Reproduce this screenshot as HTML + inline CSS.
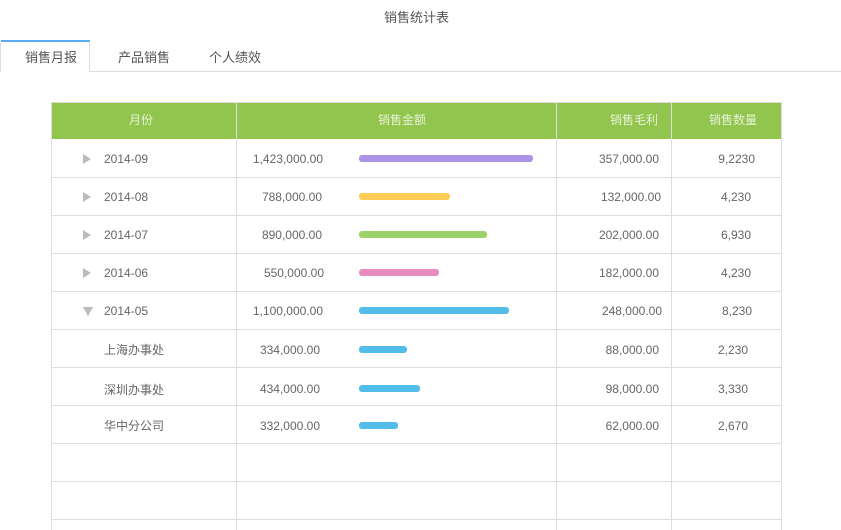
<!DOCTYPE html>
<html><head><meta charset="utf-8"><style>
html,body{margin:0;padding:0;width:841px;height:530px;overflow:hidden;background:#fefefe}
body{position:relative;font-family:"Liberation Sans","Noto Sans CJK SC",sans-serif;font-size:12px;color:#666}
div{position:absolute;box-sizing:border-box}
.t{white-space:nowrap;line-height:16px;height:16px}
.r{text-align:right;width:100px}
.h{background:#ddd;height:1px;left:51px;width:731px}
.v{background:#ddd;width:1px;top:102px;height:428px}
.w{color:#e6f2d6;top:112px}
.b{height:7px;left:359px;border-radius:3px}
.tri{left:83px;width:0;height:0;border-left:8px solid #bbb;border-top:5px solid transparent;border-bottom:5px solid transparent}
.m{left:104px}
.tab{top:50px;font-size:13px;color:#555}
</style></head><body>
<div class="t" style="left:0;width:833px;text-align:center;top:10px;color:#555;font-size:13px">销售统计表</div>
<div style="left:0;top:71px;width:841px;height:1px;background:#ddd"></div>
<div style="left:0;top:42px;width:90px;height:30px;background:#fefefe;border-right:1px solid #ddd;border-left:1px solid #ddd"></div>
<div style="left:1px;top:40px;width:89px;height:2px;background:#5cabf5"></div>
<div class="t tab" style="left:25px">销售月报</div>
<div class="t tab" style="left:118px">产品销售</div>
<div class="t tab" style="left:209px">个人绩效</div>

<div style="left:51px;top:102px;width:731px;height:428px;background:#fff"></div>
<div style="left:52px;top:103px;width:729px;height:36px;background:#92c54e"></div>
<div class="h" style="top:102px"></div>
<div class="h" style="top:177px"></div><div class="h" style="top:215px"></div><div class="h" style="top:253px"></div><div class="h" style="top:291px"></div><div class="h" style="top:329px"></div><div class="h" style="top:367px"></div><div class="h" style="top:405px"></div><div class="h" style="top:443px"></div><div class="h" style="top:481px"></div><div class="h" style="top:519px"></div>
<div class="v" style="left:51px"></div><div class="v" style="left:236px"></div><div class="v" style="left:556px"></div><div class="v" style="left:671px"></div><div class="v" style="left:781px"></div>

<div class="t w" style="left:129px">月份</div>
<div class="t w" style="left:378px">销售金额</div>
<div class="t w" style="left:610px">销售毛利</div>
<div class="t w" style="left:709px">销售数量</div>

<div class="tri" style="top:154px"></div><div class="t m" style="top:151px">2014-09</div>
<div class="tri" style="top:192px"></div><div class="t m" style="top:189px">2014-08</div>
<div class="tri" style="top:230px"></div><div class="t m" style="top:227px">2014-07</div>
<div class="tri" style="top:268px"></div><div class="t m" style="top:265px">2014-06</div>
<div style="left:83px;top:307px;width:0;height:0;border-top:9px solid #bbb;border-left:5px solid transparent;border-right:5px solid transparent"></div><div class="t m" style="top:303px">2014-05</div>
<div class="t m" style="top:342px">上海办事处</div>
<div class="t m" style="top:382px">深圳办事处</div>
<div class="t m" style="top:418px">华中分公司</div>

<div class="t r" style="left:223px;top:151px">1,423,000.00</div>
<div class="t r" style="left:222px;top:189px">788,000.00</div>
<div class="t r" style="left:222px;top:227px">890,000.00</div>
<div class="t r" style="left:224px;top:265px">550,000.00</div>
<div class="t r" style="left:223px;top:303px">1,100,000.00</div>
<div class="t r" style="left:220px;top:342px">334,000.00</div>
<div class="t r" style="left:220px;top:381px">434,000.00</div>
<div class="t r" style="left:220px;top:418px">332,000.00</div>

<div class="b" style="top:155px;width:174px;background:#ab93e8"></div>
<div class="b" style="top:193px;width:91px;background:#ffcd56"></div>
<div class="b" style="top:231px;width:128px;background:#9bd26a"></div>
<div class="b" style="top:269px;width:80px;background:#e88cc0"></div>
<div class="b" style="top:307px;width:150px;background:#52bde8"></div>
<div class="b" style="top:346px;width:48px;background:#52bde8"></div>
<div class="b" style="top:385px;width:61px;background:#52bde8"></div>
<div class="b" style="top:422px;width:39px;background:#52bde8"></div>

<div class="t r" style="left:559px;top:151px">357,000.00</div>
<div class="t r" style="left:561px;top:189px">132,000.00</div>
<div class="t r" style="left:559px;top:227px">202,000.00</div>
<div class="t r" style="left:559px;top:265px">182,000.00</div>
<div class="t r" style="left:562px;top:303px">248,000.00</div>
<div class="t r" style="left:559px;top:342px">88,000.00</div>
<div class="t r" style="left:559px;top:381px">98,000.00</div>
<div class="t r" style="left:559px;top:418px">62,000.00</div>

<div class="t r" style="left:655px;top:151px">9,2230</div>
<div class="t r" style="left:651px;top:189px">4,230</div>
<div class="t r" style="left:651px;top:227px">6,930</div>
<div class="t r" style="left:651px;top:265px">4,230</div>
<div class="t r" style="left:652px;top:303px">8,230</div>
<div class="t r" style="left:648px;top:342px">2,230</div>
<div class="t r" style="left:648px;top:381px">3,330</div>
<div class="t r" style="left:648px;top:418px">2,670</div>
</body></html>
